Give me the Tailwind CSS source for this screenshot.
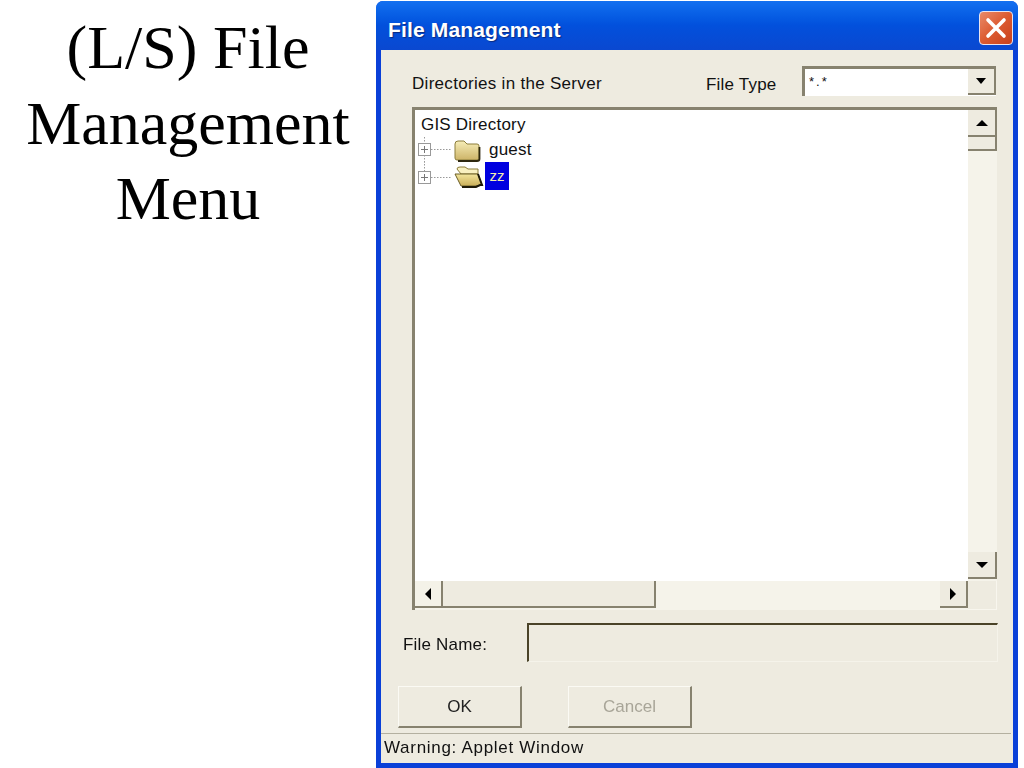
<!DOCTYPE html>
<html lang="en">
<head>
    <meta charset="UTF-8">
    <title>(L/S) File Management Menu</title>
    <script src="https://cdn.jsdelivr.net/npm/@tailwindcss/browser@4"></script>
</head>
<body class="bg-white w-[1024px] h-[768px] overflow-hidden flex">

    <!-- Slide title -->
    <h1 class="w-[376px] pt-[10px] text-center text-[62px] leading-[75.5px] text-black font-['Liberation_Serif',serif]">
        (L/S) File<br>Management<br>Menu
    </h1>

    <!-- Applet window -->
    <div class="w-[642px] h-[767px] mt-px flex flex-col rounded-t-[7px] overflow-hidden bg-[#0a40d8] font-['Liberation_Sans',sans-serif] blur-[0.4px]">

        <!-- Title bar -->
        <div class="h-[49px] shrink-0 flex items-center justify-between pl-[12px] pr-[5px] bg-gradient-to-b from-[#1470f0] via-[#0250dc] to-[#0a48d0]">
            <span class="mt-[8px] text-[21px] font-bold text-white tracking-[0.15px] [text-shadow:1px_1px_1px_#0a2a80]">File Management</span>
            <div class="mt-[5px] w-[34px] h-[34px] rounded-[4px] border border-[#e8e4f0] bg-gradient-to-br from-[#e88a68] via-[#dc5a30] to-[#c8401c] flex items-center justify-center">
                <svg width="24" height="24" viewBox="0 0 24 24"><path d="M4 4 L20 20 M20 4 L4 20" stroke="#fff" stroke-width="3.6" stroke-linecap="round"/></svg>
            </div>
        </div>

        <!-- Client area -->
        <div class="flex-1 mx-[5px] bg-[#eeebe0] flex flex-col text-[17px] text-[#111]">

            <!-- Top row -->
            <div class="h-[57px] shrink-0 flex items-start">
                <span class="ml-[31px] mt-[24px] leading-[20px] w-[294px] tracking-[0.3px]">Directories in the Server</span>
                <span class="mt-[25px] leading-[20px] w-[96px] tracking-[0.2px]">File Type</span>
                <div class="mt-[16px] w-[194px] h-[30px] flex bg-white border-t-[3px] border-l-[3px] border-[#87826f]">
                    <span class="flex-1 pl-[4px] pt-[5px] text-[13px] leading-[16px] tracking-[2px]">*.*</span>
                    <div class="w-[28px] h-[26px] bg-[#eeebe0] border-r-[2px] border-b-[2px] border-[#87826f] flex items-center justify-center">
                        <svg width="10" height="6" viewBox="0 0 10 6"><path d="M0 0 H10 L5 6 Z" fill="#000"/></svg>
                    </div>
                </div>
            </div>

            <!-- Directory tree with scroll bars -->
            <div class="ml-[31px] w-[585px] h-[503px] shrink-0 bg-[#f5f3ea] border-t-[3px] border-l-[3px] border-[#87826f] grid grid-cols-[1fr_29px] grid-rows-[1fr_29px]">
                <div class="bg-white pl-[6px] pt-[3px]">
                    <div class="leading-[24px] tracking-[0.2px]">GIS Directory</div>
                    <div class="-ml-[3px] h-[26px] flex items-center">
                        <svg width="36" height="26" viewBox="0 0 36 26" class="shrink-0">
                            <path d="M6.5 0 V6 M6.5 18 V26 M13 12.5 H33" stroke="#999" stroke-dasharray="1.5 1.5" fill="none"/>
                            <rect x="0.5" y="6.5" width="12" height="12" fill="#fff" stroke="#999"/>
                            <path d="M3 12.5 H10 M6.5 9 V16" stroke="#777"/>
                        </svg>
                        <svg width="27" height="23" viewBox="0 0 27 23" class="shrink-0">
                            <defs><linearGradient id="closedFolder" x1="0" y1="0" x2="0" y2="1"><stop offset="0" stop-color="#f6edb8"/><stop offset="1" stop-color="#cdb468"/></linearGradient></defs>
                            <path d="M1 5 Q1 2 4 2 H10 L13 5 H23 Q25 5 25 7 V20 Q25 21 23 21 H3 Q1 21 1 19 Z" fill="url(#closedFolder)" stroke="#8b7c3a"/>
                            <path d="M25.5 8 V20 Q25.5 22 23 22 H4" stroke="#2e2810" stroke-width="1.8" fill="none"/>
                        </svg>
                        <span class="ml-[8px] leading-[20px] tracking-[0.2px]">guest</span>
                    </div>
                    <div class="-ml-[3px] h-[26px] flex items-center">
                        <svg width="36" height="30" viewBox="0 0 36 30" class="shrink-0">
                            <path d="M6.5 0 V10 M13 16.5 H33" stroke="#999" stroke-dasharray="1.5 1.5" fill="none"/>
                            <rect x="0.5" y="10.5" width="12" height="12" fill="#fff" stroke="#999"/>
                            <path d="M3 16.5 H10 M6.5 13 V20" stroke="#777"/>
                        </svg>
                        <svg width="30" height="23" viewBox="0 0 30 23" class="shrink-0">
                            <defs><linearGradient id="openFolder" x1="0" y1="0" x2="0" y2="1"><stop offset="0" stop-color="#f2e59c"/><stop offset="1" stop-color="#c9ae58"/></linearGradient></defs>
                            <path d="M3 4 Q3 2 6 2 H11 L14 4 H24 V9 H7 Z" fill="#f8f0c0" stroke="#8b7c3a"/>
                            <path d="M1 9 H24 L28 20 Q24 21 22 21 H7 Z" fill="url(#openFolder)" stroke="#6b5e28"/>
                            <path d="M24 9 L28 20 H26 L22 22 H8" stroke="#1e1a08" stroke-width="2" fill="none"/>
                        </svg>
                        <span class="ml-px w-[24px] h-[28px] bg-[#0000e0] text-[#f4efb0] text-[15px] font-medium leading-[28px] text-center">zz</span>
                    </div>
                </div>

                <!-- Vertical scroll bar -->
                <div class="flex flex-col justify-between pb-[2px]">
                    <div>
                        <div class="w-[29px] h-[27px] bg-[#eeebe0] border-r-[2px] border-b-[2px] border-[#87826f] flex items-center justify-center">
                            <svg width="14" height="8" viewBox="0 0 14 8"><path d="M7 1 L13 7 H1 Z" fill="#000"/></svg>
                        </div>
                        <div class="w-[29px] h-[14px] bg-[#eeebe0] border-r-[2px] border-b-[2px] border-[#87826f]"></div>
                    </div>
                    <div class="w-[29px] h-[27px] bg-[#eeebe0] border-r-[2px] border-b-[2px] border-[#87826f] flex items-center justify-center">
                        <svg width="14" height="8" viewBox="0 0 14 8"><path d="M1 1 H13 L7 7 Z" fill="#000"/></svg>
                    </div>
                </div>

                <!-- Horizontal scroll bar -->
                <div class="flex h-[27px]">
                    <div class="w-[28px] bg-[#f4f2e8] border-r-[2px] border-b-[2px] border-[#87826f] flex items-center justify-center">
                        <svg width="8" height="14" viewBox="0 0 8 14"><path d="M7 1 V13 L1 7 Z" fill="#000"/></svg>
                    </div>
                    <div class="w-[213px] bg-[#eeebe0] border-r-[2px] border-b-[2px] border-[#87826f]"></div>
                    <div class="flex-1"></div>
                    <div class="w-[28px] bg-[#eeebe0] border-r-[2px] border-b-[2px] border-[#87826f] flex items-center justify-center">
                        <svg width="8" height="14" viewBox="0 0 8 14"><path d="M1 1 V13 L7 7 Z" fill="#000"/></svg>
                    </div>
                </div>
                <div class="bg-[#eeebe0] border-r border-b border-[#f8f6ee]"></div>
            </div>

            <!-- File name -->
            <div class="mt-[13px] h-[39px] shrink-0 flex items-center">
                <span class="ml-[22px] w-[124px] leading-[20px] mt-[4px] tracking-[0.2px]">File Name:</span>
                <div class="w-[471px] h-[39px] border-t-[2px] border-l-[2px] border-[#4a4328] border-r border-b border-r-[#f5f3ea] border-b-[#f5f3ea]"></div>
            </div>

            <!-- Buttons -->
            <div class="mt-[24px] h-[42px] shrink-0 flex ml-[17px] gap-[46px]">
                <button class="w-[124px] bg-[#eeebe0] border-t border-l border-t-[#fbfaf4] border-l-[#fbfaf4] border-r-[2px] border-b-[2px] border-r-[#87826f] border-b-[#87826f] text-[#222]">OK</button>
                <button class="w-[124px] bg-[#eeebe0] border-t border-l border-t-[#fbfaf4] border-l-[#fbfaf4] border-r-[2px] border-b-[2px] border-r-[#87826f] border-b-[#87826f] text-[#a8a598]">Cancel</button>
            </div>

            <!-- Status bar -->
            <div class="mt-[5px] flex-1 border-t border-[#b4b0a0] mr-[2px] pl-[3px] pt-[4px] leading-[20px] tracking-[0.7px]">Warning: Applet Window</div>
        </div>

        <div class="h-[5px] shrink-0 bg-[#0a40d8]"></div>
    </div>
</body>
</html>
